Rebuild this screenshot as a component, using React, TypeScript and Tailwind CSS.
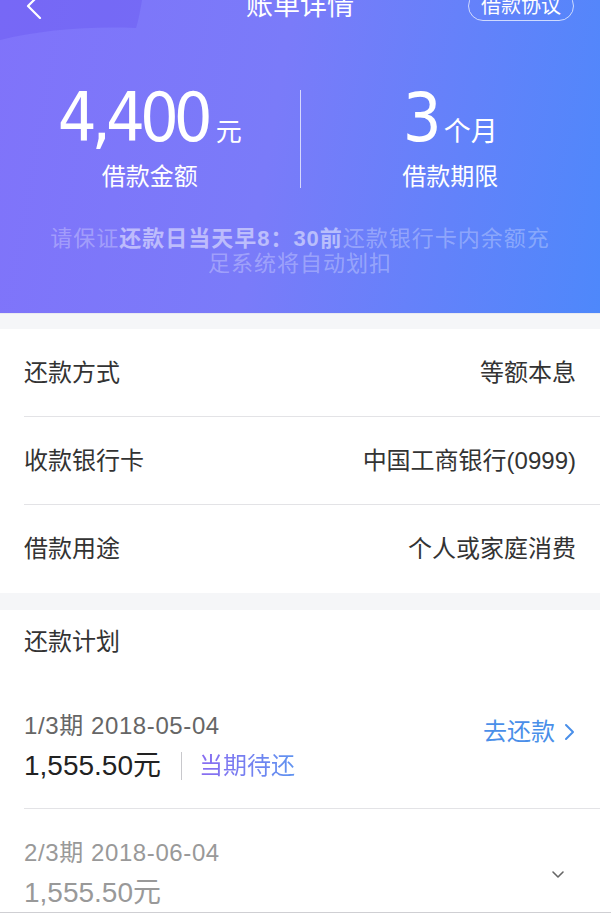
import React from "react";

const cjk = "font-['Liberation_Sans','Noto_Sans_CJK_SC',sans-serif]";
const digits = "font-['Liberation_Sans_Narrow','DejaVu_Sans_Condensed',sans-serif]";

function InfoRow({ label, value, last }: { label: string; value: string; last?: boolean }) {
  return (
    <div className={`flex h-[88px] items-center justify-between ml-6 pr-6 ${last ? "" : "border-b border-[#e3e3e6]"}`}>
      <span className="text-[24px] leading-6 text-[#333]">{label}</span>
      <span className="text-[24px] leading-6 text-[#333]">{value}</span>
    </div>
  );
}

export default function App() {
  return (
    <div className={`w-[611px] min-h-[914px] bg-white ${cjk}`}>
      <div className="w-[600px]">
        {/* header */}
        <div className="relative h-[313px] overflow-hidden bg-[linear-gradient(100deg,#8073fa_0%,#7a7bf9_45%,#4e88fb_100%)]">
          <svg className="absolute left-0 top-0" width="600" height="80" viewBox="0 0 600 80">
            <path d="M0 0 H142 C140 12 138 22 136 28 C90 26 40 30 0 40 Z" fill="#6a58ef" fillOpacity="0.4" />
          </svg>

          <div className="relative -mt-[14px] grid h-10 grid-cols-[1fr_auto_1fr] items-center px-6">
            <div>
              <svg width="16" height="26" viewBox="0 0 16 26" className="ml-[2px]">
                <polyline points="14,1 2,13 14,25" fill="none" stroke="white" strokeWidth="2.2" strokeLinecap="round" strokeLinejoin="round" />
              </svg>
            </div>
            <div className="text-[27px] leading-none text-white">账单详情</div>
            <div className="flex justify-end">
              <span className="mr-[2px] flex h-[30px] items-center rounded-full border border-white/70 px-[12px] text-[20px] leading-none text-white">
                借款协议
              </span>
            </div>
          </div>

          <div className="relative mt-[58px] flex">
            <div className="flex flex-1 flex-col items-center">
              <div className="flex items-baseline text-white">
                <span className={`${digits} text-[68px] leading-[68px] tracking-[-5px]`}>4,400</span>
                <span className="ml-[8px] text-[26px] leading-none">元</span>
              </div>
              <div className="mt-[13px] text-[24px] leading-6 text-white">借款金额</div>
            </div>
            <div className="mt-[6px] h-[98px] w-px bg-white/70" />
            <div className="flex flex-1 flex-col items-center">
              <div className="flex items-baseline text-white">
                <span className={`${digits} text-[68px] leading-[68px]`}>3</span>
                <span className="ml-[2px] text-[27px] leading-none">个月</span>
              </div>
              <div className="mt-[13px] text-[24px] leading-6 text-white">借款期限</div>
            </div>
          </div>

          <div className="relative mt-[37px] text-center text-[22px] leading-[25px] tracking-[1px] text-white/30">
            <div>
              请保证<span className="font-bold text-white/50">还款日当天早8：30前</span>还款银行卡内余额充
            </div>
            <div>足系统将自动划扣</div>
          </div>
        </div>

        <div className="h-4 border-t border-[#e9eaf0] bg-[#f5f6f8]" />

        <InfoRow label="还款方式" value="等额本息" />
        <InfoRow label="收款银行卡" value="中国工商银行(0999)" />
        <InfoRow label="借款用途" value="个人或家庭消费" last />

        <div className="h-[17px] bg-[#f5f6f8]" />

        <div className="flex h-[64px] items-center px-6">
          <span className="text-[24px] leading-6 text-[#333]">还款计划</span>
        </div>

        {/* current period */}
        <div className="ml-6 flex items-center justify-between border-b border-[#e3e3e6] pb-[28px] pr-6 pt-[40px]">
          <div>
            <div className="text-[24px] leading-6 tracking-[0.6px] text-[#666]">1/3期 2018-05-04</div>
            <div className="mt-[14px] flex items-center">
              <span className="text-[28px] leading-[28px] text-[#222]">1,555.50元</span>
              <span className="ml-[20px] h-[28px] w-px bg-[#c8c8cc]" />
              <span className="ml-[17px] bg-[linear-gradient(90deg,#8a6cf1,#5f93f0)] bg-clip-text text-[24px] leading-6 text-transparent">
                当期待还
              </span>
            </div>
          </div>
          <div className="-mt-[30px] flex items-center text-[#4a8fe9]">
            <span className="text-[24px] leading-6">去还款</span>
            <svg width="12" height="18" viewBox="0 0 12 18" className="ml-[9px]">
              <polyline points="2,2 9,9 2,16" fill="none" stroke="#4a8fe9" strokeWidth="2" strokeLinecap="round" strokeLinejoin="round" />
            </svg>
          </div>
        </div>

        {/* next period */}
        <div className="ml-6 flex items-center justify-between pb-[5px] pr-6 pt-[32px]">
          <div>
            <div className="text-[24px] leading-6 tracking-[0.6px] text-[#999]">2/3期 2018-06-04</div>
            <div className="mt-[14px] text-[28px] leading-[28px] text-[#999]">1,555.50元</div>
          </div>
          <svg width="14" height="10" viewBox="0 0 14 10" className="mr-[11px] mt-[2px]">
            <polyline points="2,2 7,7 12,2" fill="none" stroke="#666" strokeWidth="1.6" strokeLinecap="round" strokeLinejoin="round" />
          </svg>
        </div>
      </div>
      <div className="h-px w-[611px] bg-[#cfcfd3]" />
    </div>
  );
}
